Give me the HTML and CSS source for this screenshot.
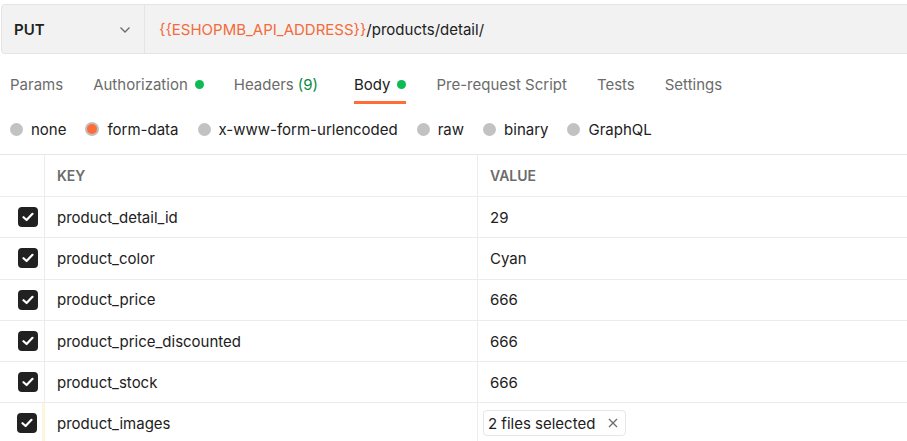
FILE: index.html
```html
<!DOCTYPE html>
<html>
<head>
<meta charset="utf-8">
<link rel="stylesheet" href="styles.css">
</head>
<body>
<div class="page">
  <div class="urlbar">
    <div class="method">
      <span class="method-name">PUT</span>
      <svg class="chev" width="12" height="8" viewBox="0 0 12 8"><path d="M1.5 1.5 L6 6 L10.5 1.5" fill="none" stroke="#6b6b6b" stroke-width="1.3"/></svg>
    </div>
    <div class="url"><span class="var">{{ESHOPMB_API_ADDRESS}}</span>/products/detail/</div>
  </div>

  <div class="tabs">
    <div class="tab">Params</div>
    <div class="tab">Authorization <span class="dot"></span></div>
    <div class="tab wide">Headers <span class="count">(9)</span></div>
    <div class="tab active">Body <span class="dot"></span></div>
    <div class="tab">Pre-request Script</div>
    <div class="tab">Tests</div>
    <div class="tab">Settings</div>
  </div>

  <div class="radios">
    <label class="radio"><span class="circle"></span>none</label>
    <label class="radio"><span class="circle on"></span>form-data</label>
    <label class="radio"><span class="circle"></span>x-www-form-urlencoded</label>
    <label class="radio"><span class="circle"></span>raw</label>
    <label class="radio"><span class="circle"></span>binary</label>
    <label class="radio"><span class="circle"></span>GraphQL</label>
  </div>

  <div class="table">
    <div class="row head">
      <div class="c-check"></div>
      <div class="c-key">KEY</div>
      <div class="c-val">VALUE</div>
    </div>
    <div class="row">
      <div class="c-check"><span class="cb"><svg width="12" height="10" viewBox="0 0 12 10"><path d="M1.5 5.2 L4.6 8 L10.5 1.8" fill="none" stroke="#fff" stroke-width="2.2" stroke-linecap="round" stroke-linejoin="round"/></svg></span></div>
      <div class="c-key">product_detail_id</div>
      <div class="c-val">29</div>
    </div>
    <div class="row">
      <div class="c-check"><span class="cb"><svg width="12" height="10" viewBox="0 0 12 10"><path d="M1.5 5.2 L4.6 8 L10.5 1.8" fill="none" stroke="#fff" stroke-width="2.2" stroke-linecap="round" stroke-linejoin="round"/></svg></span></div>
      <div class="c-key">product_color</div>
      <div class="c-val">Cyan</div>
    </div>
    <div class="row">
      <div class="c-check"><span class="cb"><svg width="12" height="10" viewBox="0 0 12 10"><path d="M1.5 5.2 L4.6 8 L10.5 1.8" fill="none" stroke="#fff" stroke-width="2.2" stroke-linecap="round" stroke-linejoin="round"/></svg></span></div>
      <div class="c-key">product_price</div>
      <div class="c-val">666</div>
    </div>
    <div class="row">
      <div class="c-check"><span class="cb"><svg width="12" height="10" viewBox="0 0 12 10"><path d="M1.5 5.2 L4.6 8 L10.5 1.8" fill="none" stroke="#fff" stroke-width="2.2" stroke-linecap="round" stroke-linejoin="round"/></svg></span></div>
      <div class="c-key">product_price_discounted</div>
      <div class="c-val">666</div>
    </div>
    <div class="row">
      <div class="c-check"><span class="cb"><svg width="12" height="10" viewBox="0 0 12 10"><path d="M1.5 5.2 L4.6 8 L10.5 1.8" fill="none" stroke="#fff" stroke-width="2.2" stroke-linecap="round" stroke-linejoin="round"/></svg></span></div>
      <div class="c-key">product_stock</div>
      <div class="c-val">666</div>
    </div>
    <div class="row last">
      <div class="c-check"><span class="cb"><svg width="12" height="10" viewBox="0 0 12 10"><path d="M1.5 5.2 L4.6 8 L10.5 1.8" fill="none" stroke="#fff" stroke-width="2.2" stroke-linecap="round" stroke-linejoin="round"/></svg></span></div>
      <div class="c-key">product_images</div>
      <div class="c-val"><span class="chip">2 files selected <svg class="x" width="10" height="10" viewBox="0 0 10 10"><path d="M1 1 L9 9 M9 1 L1 9" stroke="#6b6b6b" stroke-width="1.3"/></svg></span></div>
    </div>
  </div>
</div>
</body>
</html>
```

FILE: styles.css
```css
* { box-sizing: border-box; }
html, body { margin: 0; padding: 0; background: #fff; overflow: hidden; }
body {
  font-family: Inter, "Noto Sans", sans-serif;
  font-size: 15px;
  color: #212121;
}
.page { width: 907px; }

.urlbar {
  margin: 4px 0 0 1px;
  width: 930px;
  height: 50px;
  display: flex;
  background: #f2f2f2;
  border: 1px solid #e4e4e4;
  border-radius: 4px;
}
.method {
  width: 143px;
  display: flex;
  align-items: center;
  justify-content: space-between;
  padding: 0 13px 0 12px;
  border-right: 1px solid #e4e4e4;
}
.method-name { font-weight: 600; font-size: 15px; color: #212121; }
.chev { margin-top: 1px; }
.url {
  display: flex;
  align-items: center;
  padding-left: 14px;
  font-size: 15px;
  color: #212121;
}
.var { color: #f26b3a; }

.tabs {
  display: flex;
  gap: 30px;
  padding: 0 10px;
  height: 50px;
  align-items: stretch;
}
.tab {
  display: flex;
  align-items: center;
  color: #6b6b6b;
  font-size: 15px;
  height: 50px;
  padding-top: 13px;
  border-bottom: 3px solid transparent;
}
.tab.wide { margin-right: 6px; }
.tab.active { color: #212121; border-bottom-color: #ff6c37; }
.dot {
  width: 9px; height: 9px; border-radius: 50%;
  background: #0cbb52;
  margin-left: 7px;
}
.count { color: #0a8a43; margin-left: 4px; }

.radios {
  display: flex;
  gap: 19px;
  align-items: center;
  height: 51px;
  padding: 0 10px;
  border-bottom: 1px solid #e6e6e6;
}
.radio {
  display: flex;
  align-items: center;
  gap: 8px;
  font-size: 15px;
  color: #212121;
}
.circle {
  width: 13px; height: 13px; border-radius: 50%;
  background: #c2c2c2;
}
.circle.on {
  background: #ff6c37;
  border: 2px solid #bfbfbf;
  width: 14px; height: 14px;
}

.table { display: flex; flex-direction: column; }
.row {
  display: grid;
  grid-template-columns: 45px 433px 1fr;
  height: 41.3px;
  border-bottom: 1px solid #ececec;
}
.row.head { height: 42px; }
.row.last { border-bottom: none; height: 40px; }
.row > div { display: flex; align-items: center; }
.c-check { justify-content: center; border-right: 1px solid #ececec; padding-left: 12px; }
.c-key { padding-left: 12px; border-right: 1px solid #ececec; font-size: 15px; }
.c-val { padding-left: 12px; font-size: 15px; }
.head .c-key, .head .c-val { font-weight: 600; color: #6b6b6b; font-size: 14px; }
.row.last .c-check { border-right: 3px solid #fdf6dc; }
.row.last .c-key { margin-left: -3px; padding-left: 15px; }

.cb {
  width: 20px; height: 20px;
  border-radius: 4px;
  background: #212121;
  display: flex; align-items: center; justify-content: center;
}
.chip {
  display: inline-flex;
  align-items: center;
  gap: 13px;
  height: 26px;
  padding: 0 7px 0 4px;
  margin-left: -7px;
  border: 1px solid #e6e6e6;
  border-radius: 4px;
  font-size: 15px;
}
```
